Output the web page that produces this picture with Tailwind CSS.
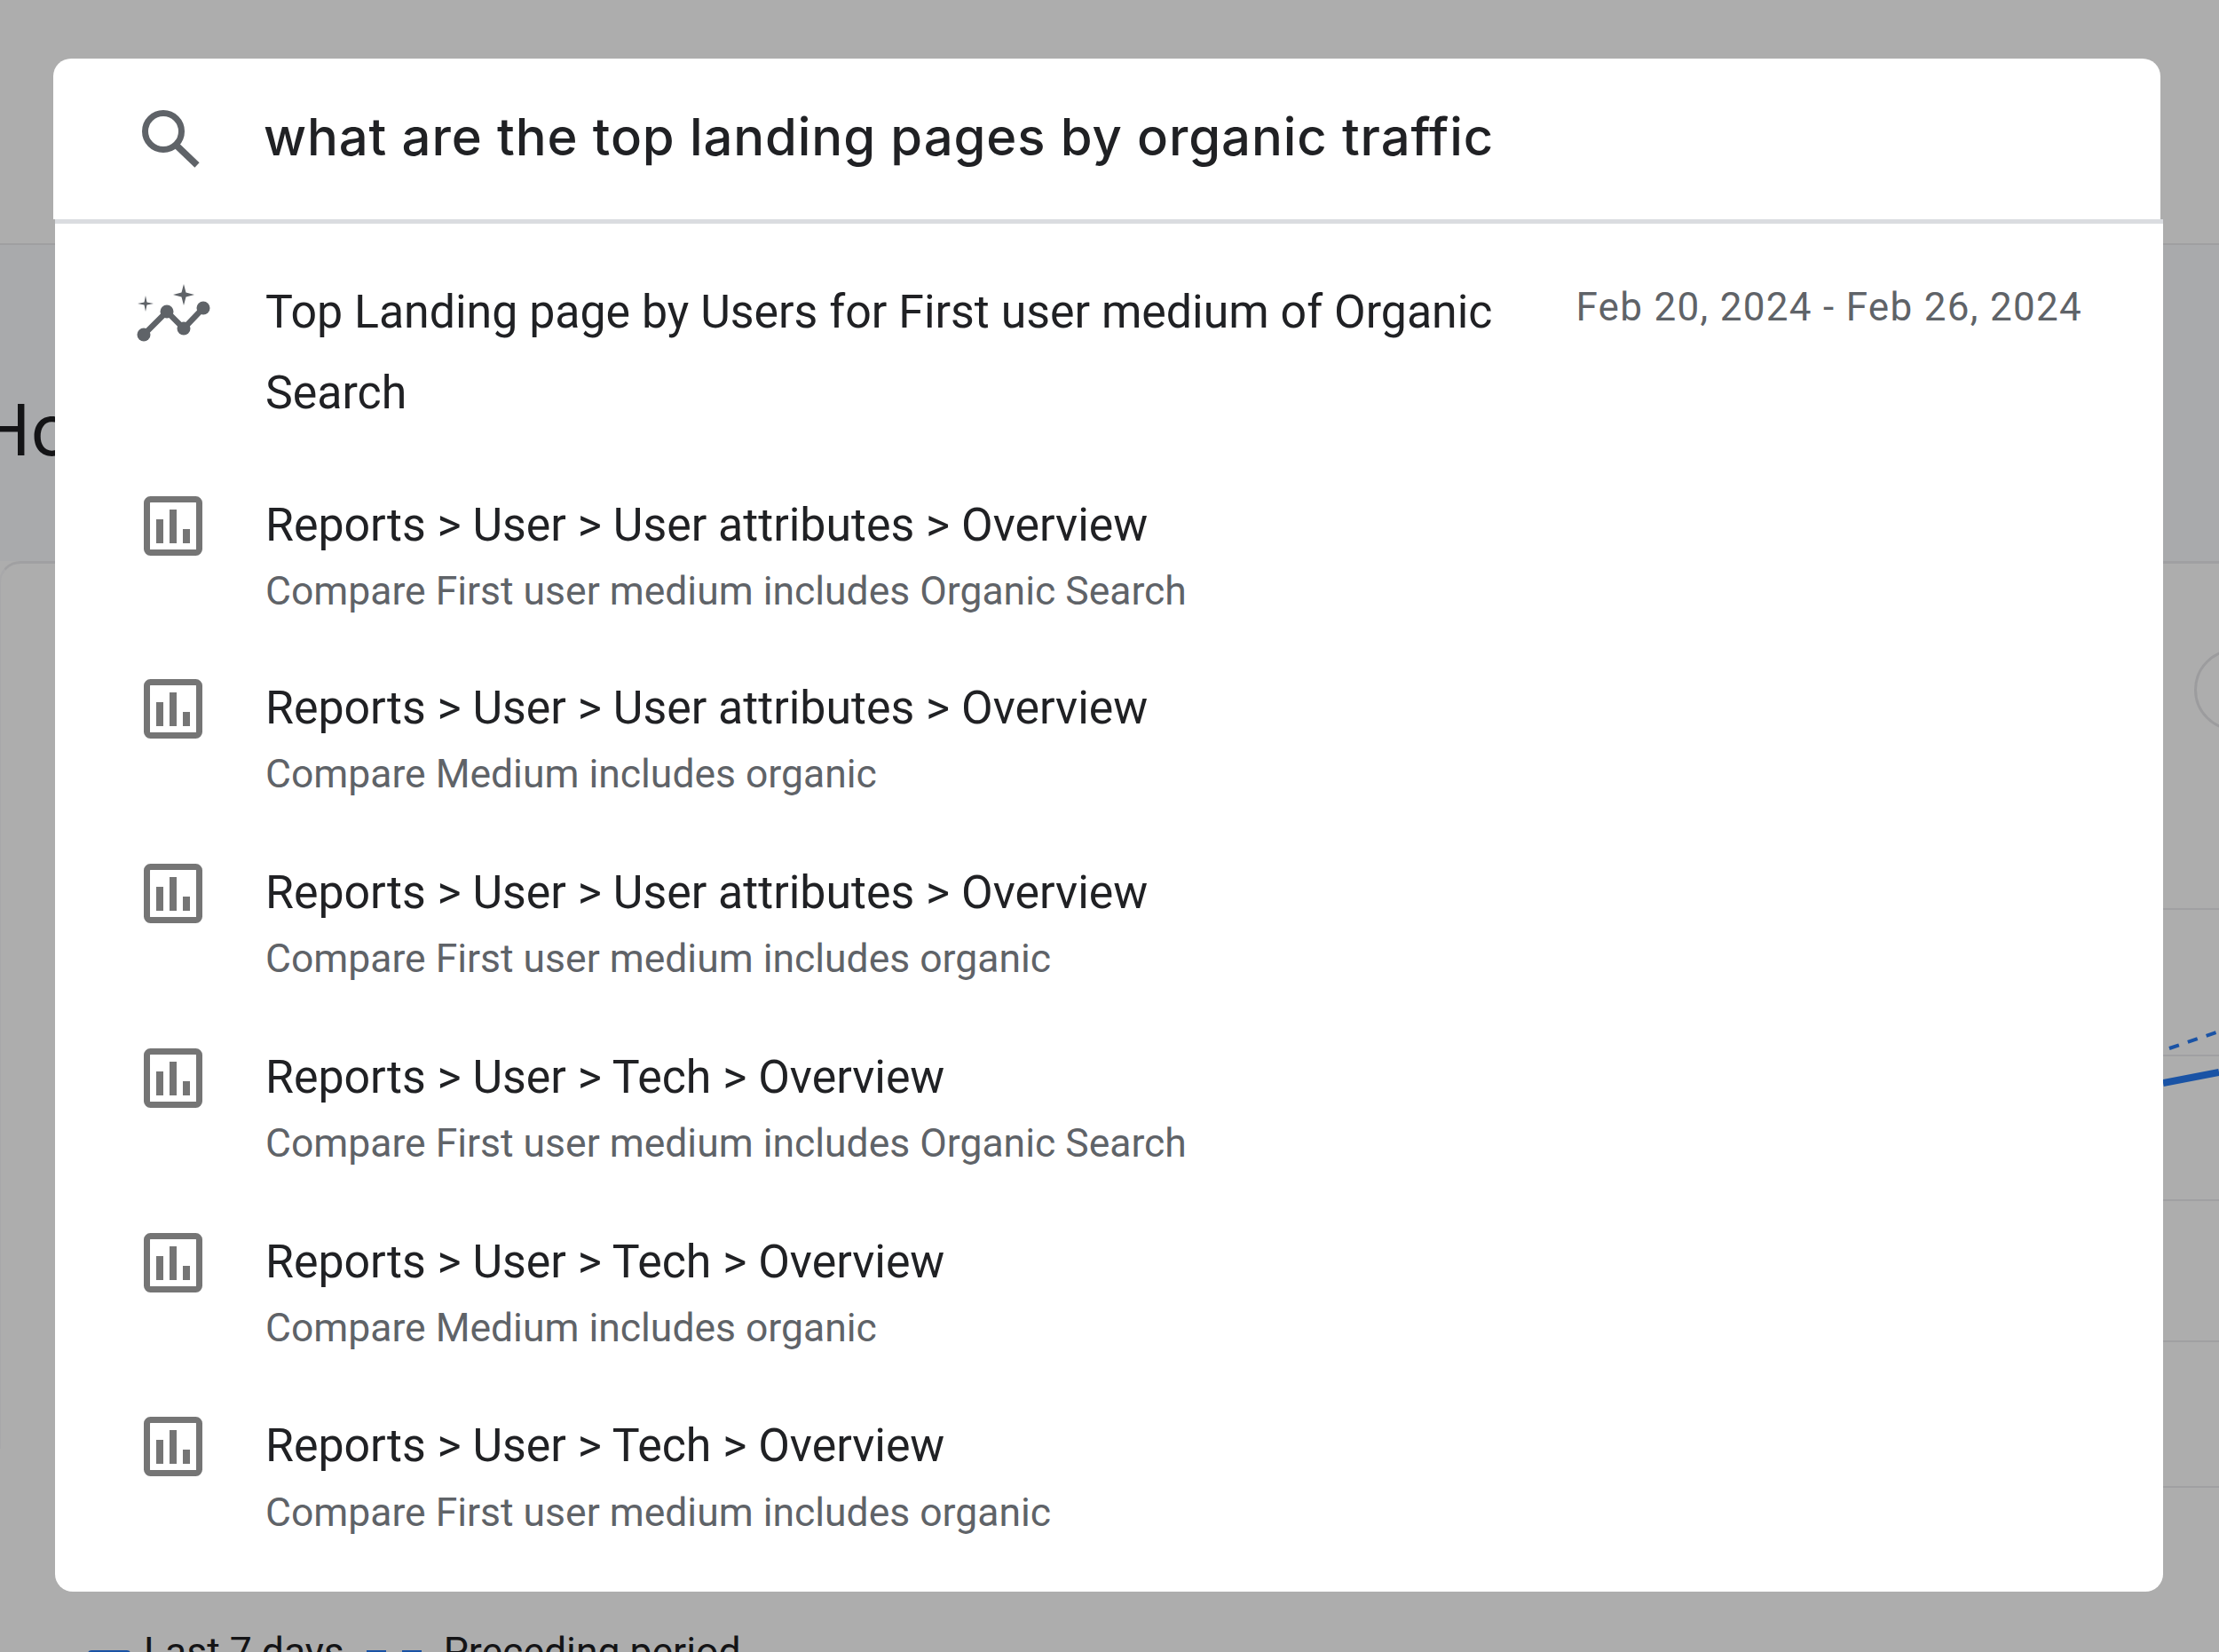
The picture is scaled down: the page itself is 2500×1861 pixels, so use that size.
<!DOCTYPE html>
<html><head><meta charset="utf-8"><script src="https://cdn.jsdelivr.net/npm/@tailwindcss/browser@4"></script></head>
<body class="m-0 bg-[#adadad]">
<div class="relative w-[2500px] h-[1861px] overflow-hidden bg-[#adadad] font-['Roboto',sans-serif]">
  <!-- page behind the scrim -->
  <div class="h-[276px] border-b-2 border-[#9f9fa1]"></div>
  <div class="h-[356px] bg-[#a9aaac] relative">
    <div class="absolute left-[-25px] top-[158px] text-[80px] leading-[100px] text-[#141416] font-['Inter',sans-serif] whitespace-nowrap">Home</div>
  </div>
  <div class="h-[1000px] ml-[-1px] mr-[-40px] rounded-t-[24px] border-t-[3px] border-l-2 border-t-[#a0a0a2] border-l-[#a8a8aa] bg-[#adadad] relative">
    <div class="absolute left-[2471px] top-[96px] w-[92px] h-[92px] rounded-full border-[3px] border-[#9c9c9e]"></div>
  </div>
  <svg class="absolute left-[2437px] top-[1000px]" width="63" height="700" viewBox="0 0 63 700" fill="none">
    <g stroke="#a0a0a2" stroke-width="2"><path d="M0 24H63M0 189H63M0 352H63M0 511H63M0 675H63"/></g>
    <path d="M0 220L63 208" stroke="#1a53a5" stroke-width="8"/>
    <path d="M7 181L60 163" stroke="#1a53a5" stroke-width="4" stroke-dasharray="11.5 10.5"/>
  </svg>
  <div class="absolute left-[99px] top-[1835px] flex items-start text-[44.5px] leading-[52px] text-[#141416] whitespace-nowrap">
    <span class="w-[48px] h-[6px] mt-[24px] rounded-t-sm bg-[#1a53a5]"></span>
    <span class="ml-[15px]">Last 7 days</span>
    <span class="ml-[25px] mt-[24px] flex gap-[18px]"><i class="block w-[22px] h-[6px] bg-[#1a53a5]"></i><i class="block w-[22px] h-[6px] bg-[#1a53a5]"></i></span>
    <span class="ml-[25px]">Preceding period</span>
  </div>

  <!-- search dialog -->
  <div class="absolute left-[60px] top-[66px] w-[2377px]">
    <div class="mr-[3px] h-[181px] bg-white rounded-t-[20px] flex items-center">
      <svg class="ml-[96px] shrink-0" width="70" height="70" viewBox="0 0 70 70" fill="none" stroke="#5f6368"><circle cx="28" cy="26" r="20.5" stroke-width="7"/><path d="M42 41L66 64" stroke-width="7.5"/></svg>
      <div class="ml-[71px] mt-[-6px] text-[58px] leading-none font-medium tracking-[0.9px] text-[#202124] font-['Inter',sans-serif] whitespace-nowrap">what are the top landing pages by organic traffic</div>
    </div>
    <div class="ml-[2px] h-[1546px] border-t-[5px] border-[#dadce0] bg-white rounded-b-[20px]">
      <!-- ask row -->
      <div class="flex h-[306px] pt-[54px]">
        <svg class="ml-[92px] mt-[14px] shrink-0" width="84" height="66" viewBox="0 0 84 66" fill="none"><path d="M8 57L34 31L53 50L75 27" stroke="#5f6368" stroke-width="6.5"/><g fill="#5f6368"><circle cx="8" cy="57" r="7.5"/><circle cx="34" cy="31" r="7.5"/><circle cx="53" cy="50" r="7.5"/><circle cx="75" cy="27" r="7.5"/><path d="M10 13L11.5 20.5L19 22L11.5 23.5L10 31L8.500 23.500L1 22L8.500 20.500Z"/><path d="M53 0L55.500 9.500L65 12L55.500 14.500L53 24L50.500 14.500L41 12L50.500 9.500Z"/></g></svg>
        <div class="ml-[61px] w-[1400px] text-[51.85px] leading-[91px] text-[#202124]">Top Landing page by Users for First user medium of Organic Search</div>
        <div class="absolute right-[91px] top-[250px] text-[44px] leading-[60px] tracking-[1.3px] text-[#5f6368] whitespace-nowrap">Feb 20, 2024 - Feb 26, 2024</div>
      </div>
      <!-- report rows -->
      <div class="flex flex-col">
        <div class="flex h-[206px]"><svg class="ml-[100px] mt-[1px] shrink-0" width="66" height="67" viewBox="0 0 66 67"><rect x="3.500" y="3.500" width="59" height="60" rx="4" fill="none" stroke="#757575" stroke-width="7"/><path d="M14 26h8v27h-8zM29 15h8v38h-8zM44 37h8v16h-8z" fill="#757575"/></svg><div class="ml-[71px] pt-[3px]"><div class="text-[51.85px] leading-[62px] text-[#202124]">Reports &gt; User &gt; User attributes &gt; Overview</div><div class="text-[44.46px] leading-[58px] mt-[14px] text-[#5f6368]">Compare First user medium includes Organic Search</div></div></div>
        <div class="flex h-[208px]"><svg class="ml-[100px] mt-[1px] shrink-0" width="66" height="67" viewBox="0 0 66 67"><rect x="3.500" y="3.500" width="59" height="60" rx="4" fill="none" stroke="#757575" stroke-width="7"/><path d="M14 26h8v27h-8zM29 15h8v38h-8zM44 37h8v16h-8z" fill="#757575"/></svg><div class="ml-[71px] pt-[3px]"><div class="text-[51.85px] leading-[62px] text-[#202124]">Reports &gt; User &gt; User attributes &gt; Overview</div><div class="text-[44.46px] leading-[58px] mt-[14px] text-[#5f6368]">Compare Medium includes organic</div></div></div>
        <div class="flex h-[208px]"><svg class="ml-[100px] mt-[1px] shrink-0" width="66" height="67" viewBox="0 0 66 67"><rect x="3.500" y="3.500" width="59" height="60" rx="4" fill="none" stroke="#757575" stroke-width="7"/><path d="M14 26h8v27h-8zM29 15h8v38h-8zM44 37h8v16h-8z" fill="#757575"/></svg><div class="ml-[71px] pt-[3px]"><div class="text-[51.85px] leading-[62px] text-[#202124]">Reports &gt; User &gt; User attributes &gt; Overview</div><div class="text-[44.46px] leading-[58px] mt-[14px] text-[#5f6368]">Compare First user medium includes organic</div></div></div>
        <div class="flex h-[208px]"><svg class="ml-[100px] mt-[1px] shrink-0" width="66" height="67" viewBox="0 0 66 67"><rect x="3.500" y="3.500" width="59" height="60" rx="4" fill="none" stroke="#757575" stroke-width="7"/><path d="M14 26h8v27h-8zM29 15h8v38h-8zM44 37h8v16h-8z" fill="#757575"/></svg><div class="ml-[71px] pt-[3px]"><div class="text-[51.85px] leading-[62px] text-[#202124]">Reports &gt; User &gt; Tech &gt; Overview</div><div class="text-[44.46px] leading-[58px] mt-[14px] text-[#5f6368]">Compare First user medium includes Organic Search</div></div></div>
        <div class="flex h-[207px]"><svg class="ml-[100px] mt-[1px] shrink-0" width="66" height="67" viewBox="0 0 66 67"><rect x="3.500" y="3.500" width="59" height="60" rx="4" fill="none" stroke="#757575" stroke-width="7"/><path d="M14 26h8v27h-8zM29 15h8v38h-8zM44 37h8v16h-8z" fill="#757575"/></svg><div class="ml-[71px] pt-[3px]"><div class="text-[51.85px] leading-[62px] text-[#202124]">Reports &gt; User &gt; Tech &gt; Overview</div><div class="text-[44.46px] leading-[58px] mt-[14px] text-[#5f6368]">Compare Medium includes organic</div></div></div>
        <div class="flex h-[199px]"><svg class="ml-[100px] mt-[1px] shrink-0" width="66" height="67" viewBox="0 0 66 67"><rect x="3.500" y="3.500" width="59" height="60" rx="4" fill="none" stroke="#757575" stroke-width="7"/><path d="M14 26h8v27h-8zM29 15h8v38h-8zM44 37h8v16h-8z" fill="#757575"/></svg><div class="ml-[71px] pt-[3px]"><div class="text-[51.85px] leading-[62px] text-[#202124]">Reports &gt; User &gt; Tech &gt; Overview</div><div class="text-[44.46px] leading-[58px] mt-[15px] text-[#5f6368]">Compare First user medium includes organic</div></div></div>
      </div>
    </div>
  </div>
</div>
</body></html>
